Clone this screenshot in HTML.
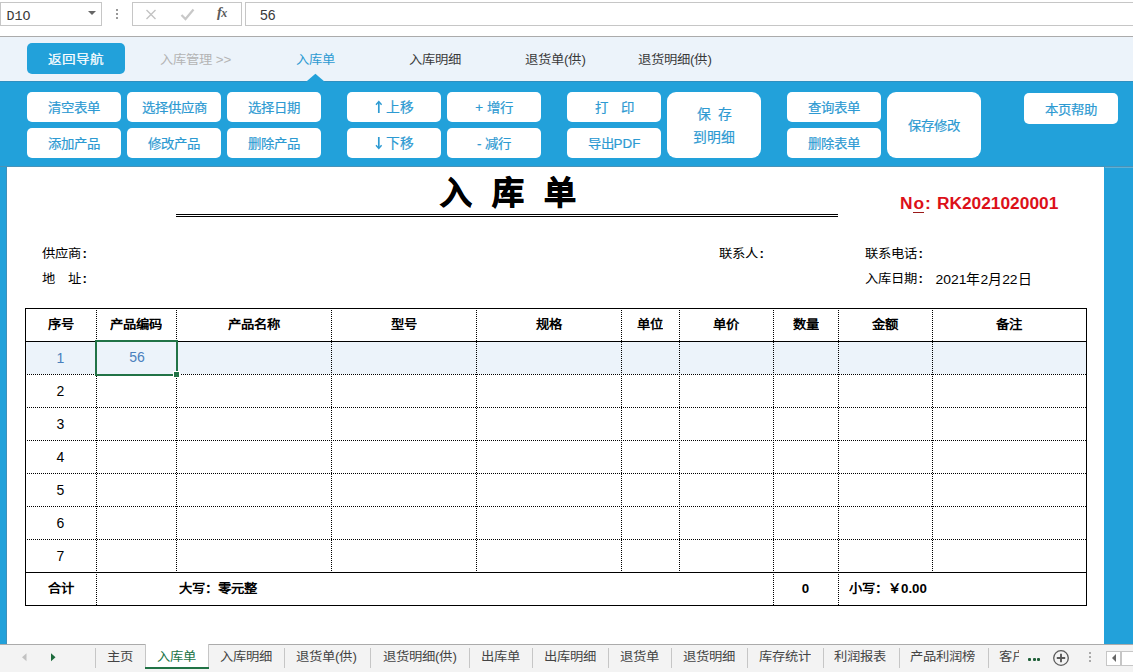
<!DOCTYPE html>
<html lang="zh-CN">
<head>
<meta charset="utf-8">
<style>
*{margin:0;padding:0;box-sizing:border-box}
html,body{width:1133px;height:672px;overflow:hidden;background:#fff;font-family:"Liberation Sans",sans-serif;position:relative}
.a{position:absolute;white-space:nowrap}
.s{display:inline-block;transform-origin:50% 50%}
.box{position:absolute;border:1px solid #c6c6c6;background:#fff}
.dv{position:absolute;width:1px;background-image:linear-gradient(#000 50%,transparent 50%);background-size:1px 2px}
.dh{position:absolute;height:1px;background-image:linear-gradient(90deg,#000 50%,transparent 50%);background-size:2px 1px}
</style>
</head>
<body>
<div class="box" style="left:0;top:2px;width:102px;height:24px"></div>
<div class="a" style="left:6.5px;top:8.5px;font-family:'Liberation Mono',monospace;font-size:13.33px;line-height:16px;color:#3a3a3a">D1O</div>
<div class="a" style="left:88px;top:11px;width:0;height:0;border-left:4px solid transparent;border-right:4px solid transparent;border-top:4px solid #666"></div>
<div class="a" style="left:116px;top:9px;width:2px;height:2px;background:#999"></div>
<div class="a" style="left:116px;top:13px;width:2px;height:2px;background:#999"></div>
<div class="a" style="left:116px;top:17px;width:2px;height:2px;background:#999"></div>
<div class="box" style="left:132px;top:2px;width:110px;height:24px"></div>
<div class="box" style="left:245px;top:2px;width:900px;height:24px"></div>
<svg class="a" style="left:145px;top:9px" width="12" height="11" viewBox="0 0 12 11"><path d="M1.5 1 L10.5 10 M10.5 1 L1.5 10" stroke="#c3c3c3" stroke-width="1.4" fill="none"/></svg>
<svg class="a" style="left:180px;top:8px" width="15" height="13" viewBox="0 0 15 13"><path d="M1.5 7 L5.5 11 L13.5 1.5" stroke="#c8c8c8" stroke-width="2.2" fill="none"/></svg>
<div class="a" style="left:217px;top:4px;font-family:'Liberation Serif',serif;font-style:italic;font-weight:bold;font-size:14.5px;line-height:16px;color:#5a5a5a;letter-spacing:-0.5px">f<span style="font-size:12px">x</span></div>
<div class="a" style="left:260px;top:7px;font-size:14px;line-height:16px;color:#3a3a3a">56</div>
<div class="a" style="left:0;top:36px;width:1133px;height:1px;background:#ababab"></div>
<div class="a" style="left:0;top:37px;width:1133px;height:44px;background:#ecf3fa"></div>
<div class="a" style="left:27px;top:43px;width:98px;height:31px;background:#22a1da;border-radius:5px"></div>
<div class="a" style="left:27px;top:43px;width:98px;height:31px;line-height:31px;text-align:center;font-size:13.6px;color:#fff;font-weight:normal;-webkit-text-stroke:0.25px #fff"><span class="s" style="transform:translateY(1.5px) scaleY(0.92)">返回导航</span></div>
<div class="a" style="left:160px;top:51px;font-size:13.33px;line-height:16px;color:#b4b4b4;font-weight:normal;"><span class="s" style="transform:translateY(1.3px) scaleY(0.92);">入库管理 &gt;&gt;</span></div>
<div class="a" style="left:296px;top:51px;font-size:13.33px;line-height:16px;color:#2d9ad2;font-weight:normal;"><span class="s" style="transform:translateY(1.3px) scaleY(0.92);">入库单</span></div>
<div class="a" style="left:409px;top:51px;font-size:13.33px;line-height:16px;color:#3a3a3a;font-weight:normal;"><span class="s" style="transform:translateY(1.3px) scaleY(0.92);">入库明细</span></div>
<div class="a" style="left:525px;top:51px;font-size:13.33px;line-height:16px;color:#3a3a3a;font-weight:normal;"><span class="s" style="transform:translateY(1.3px) scaleY(0.92);">退货单(供)</span></div>
<div class="a" style="left:638px;top:51px;font-size:13.33px;line-height:16px;color:#3a3a3a;font-weight:normal;"><span class="s" style="transform:translateY(1.3px) scaleY(0.92);">退货明细(供)</span></div>
<div class="a" style="left:0;top:81px;width:1133px;height:86px;background:#22a1da"></div>
<div class="a" style="left:0;top:81px;width:1133px;height:1px;background:#2f8fc0"></div>
<div class="a" style="left:0;top:166px;width:1133px;height:1px;background:#4893b9"></div>
<svg class="a" style="left:300px;top:70px" width="30" height="14" viewBox="300 70 30 14"><path d="M305.8 82L315.4 73.8L325 82Z" fill="#22a1da"/></svg>
<div class="a" style="left:27px;top:92px;width:94px;height:30px;background:#fff;border-radius:5px"></div>
<div class="a" style="left:27px;top:92px;width:94px;height:30px;line-height:30px;text-align:center;font-size:13.4px;color:#2d9ad2;font-weight:normal;-webkit-text-stroke:0.2px #2d9ad2"><span class="s" style="transform:translateY(1.5px) scaleY(0.95)">清空表单</span></div>
<div class="a" style="left:127px;top:92px;width:94px;height:30px;background:#fff;border-radius:5px"></div>
<div class="a" style="left:127px;top:92px;width:94px;height:30px;line-height:30px;text-align:center;font-size:13.4px;color:#2d9ad2;font-weight:normal;-webkit-text-stroke:0.2px #2d9ad2"><span class="s" style="transform:translateY(1.5px) scaleY(0.95)">选择供应商</span></div>
<div class="a" style="left:227px;top:92px;width:94px;height:30px;background:#fff;border-radius:5px"></div>
<div class="a" style="left:227px;top:92px;width:94px;height:30px;line-height:30px;text-align:center;font-size:13.4px;color:#2d9ad2;font-weight:normal;-webkit-text-stroke:0.2px #2d9ad2"><span class="s" style="transform:translateY(1.5px) scaleY(0.95)">选择日期</span></div>
<div class="a" style="left:27px;top:128px;width:94px;height:30px;background:#fff;border-radius:5px"></div>
<div class="a" style="left:27px;top:128px;width:94px;height:30px;line-height:30px;text-align:center;font-size:13.4px;color:#2d9ad2;font-weight:normal;-webkit-text-stroke:0.2px #2d9ad2"><span class="s" style="transform:translateY(1.5px) scaleY(0.95)">添加产品</span></div>
<div class="a" style="left:127px;top:128px;width:94px;height:30px;background:#fff;border-radius:5px"></div>
<div class="a" style="left:127px;top:128px;width:94px;height:30px;line-height:30px;text-align:center;font-size:13.4px;color:#2d9ad2;font-weight:normal;-webkit-text-stroke:0.2px #2d9ad2"><span class="s" style="transform:translateY(1.5px) scaleY(0.95)">修改产品</span></div>
<div class="a" style="left:227px;top:128px;width:94px;height:30px;background:#fff;border-radius:5px"></div>
<div class="a" style="left:227px;top:128px;width:94px;height:30px;line-height:30px;text-align:center;font-size:13.4px;color:#2d9ad2;font-weight:normal;-webkit-text-stroke:0.2px #2d9ad2"><span class="s" style="transform:translateY(1.5px) scaleY(0.95)">删除产品</span></div>
<div class="a" style="left:347px;top:92px;width:94px;height:30px;background:#fff;border-radius:5px"></div>
<div class="a" style="left:347px;top:128px;width:94px;height:30px;background:#fff;border-radius:5px"></div>
<div class="a" style="left:385.5px;top:99px;font-size:13.8px;line-height:16px;color:#2d9ad2;font-weight:normal;-webkit-text-stroke:0.2px #2d9ad2"><span class="s" style="transform:translateY(1.5px) scaleY(0.95);">上移</span></div>
<div class="a" style="left:385.5px;top:135px;font-size:13.8px;line-height:16px;color:#2d9ad2;font-weight:normal;-webkit-text-stroke:0.2px #2d9ad2"><span class="s" style="transform:translateY(1.5px) scaleY(0.95);">下移</span></div>
<svg class="a" style="left:374px;top:100px" width="10" height="14" viewBox="0 0 10 14"><path d="M4.8 13V2" stroke="#2d9ad2" stroke-width="1.7"/><path d="M2 4.8L4.8 1.6L7.6 4.8" stroke="#2d9ad2" stroke-width="1.4" fill="none"/></svg>
<svg class="a" style="left:374px;top:136px" width="10" height="14" viewBox="0 0 10 14"><path d="M4.8 1V12" stroke="#2d9ad2" stroke-width="1.7"/><path d="M2 9.2L4.8 12.4L7.6 9.2" stroke="#2d9ad2" stroke-width="1.4" fill="none"/></svg>
<div class="a" style="left:447px;top:92px;width:94px;height:30px;background:#fff;border-radius:5px"></div>
<div class="a" style="left:447px;top:92px;width:94px;height:30px;line-height:30px;text-align:center;font-size:13.4px;color:#2d9ad2;font-weight:normal;-webkit-text-stroke:0.2px #2d9ad2"><span class="s" style="transform:translateY(1.5px) scaleY(0.95)">+ 增行</span></div>
<div class="a" style="left:447px;top:128px;width:94px;height:30px;background:#fff;border-radius:5px"></div>
<div class="a" style="left:447px;top:128px;width:94px;height:30px;line-height:30px;text-align:center;font-size:13.4px;color:#2d9ad2;font-weight:normal;-webkit-text-stroke:0.2px #2d9ad2"><span class="s" style="transform:translateY(1.5px) scaleY(0.95)">- 减行</span></div>
<div class="a" style="left:567px;top:92px;width:94px;height:30px;background:#fff;border-radius:5px"></div>
<div class="a" style="left:567px;top:92px;width:94px;height:30px;line-height:30px;text-align:center;font-size:13.4px;color:#2d9ad2;font-weight:normal;-webkit-text-stroke:0.2px #2d9ad2"><span class="s" style="transform:translateY(1.5px) scaleY(0.95)">打　印</span></div>
<div class="a" style="left:567px;top:128px;width:94px;height:30px;background:#fff;border-radius:5px"></div>
<div class="a" style="left:567px;top:128px;width:94px;height:30px;line-height:30px;text-align:center;font-size:13.4px;color:#2d9ad2;font-weight:normal;-webkit-text-stroke:0.2px #2d9ad2"><span class="s" style="transform:translateY(1.5px) scaleY(0.95)">导出PDF</span></div>
<div class="a" style="left:667px;top:92px;width:94px;height:66px;background:#fff;border-radius:9px"></div>
<div class="a" style="left:696.5px;top:106px;font-size:13.8px;line-height:16px;color:#2d9ad2;font-weight:normal;-webkit-text-stroke:0.2px #2d9ad2"><span class="s" style="transform:translateY(1.5px) scaleY(0.95);">保</span></div>
<div class="a" style="left:717.5px;top:106px;font-size:13.8px;line-height:16px;color:#2d9ad2;font-weight:normal;-webkit-text-stroke:0.2px #2d9ad2"><span class="s" style="transform:translateY(1.5px) scaleY(0.95);">存</span></div>
<div class="a" style="left:667px;top:125px;width:94px;height:23px;line-height:23px;text-align:center;font-size:13.8px;color:#2d9ad2;font-weight:normal;-webkit-text-stroke:0.2px #2d9ad2"><span class="s" style="transform:translateY(1.5px) scaleY(0.95)">到明细</span></div>
<div class="a" style="left:787px;top:92px;width:94px;height:30px;background:#fff;border-radius:5px"></div>
<div class="a" style="left:787px;top:92px;width:94px;height:30px;line-height:30px;text-align:center;font-size:13.4px;color:#2d9ad2;font-weight:normal;-webkit-text-stroke:0.2px #2d9ad2"><span class="s" style="transform:translateY(1.5px) scaleY(0.95)">查询表单</span></div>
<div class="a" style="left:787px;top:128px;width:94px;height:30px;background:#fff;border-radius:5px"></div>
<div class="a" style="left:787px;top:128px;width:94px;height:30px;line-height:30px;text-align:center;font-size:13.4px;color:#2d9ad2;font-weight:normal;-webkit-text-stroke:0.2px #2d9ad2"><span class="s" style="transform:translateY(1.5px) scaleY(0.95)">删除表单</span></div>
<div class="a" style="left:887px;top:92px;width:94px;height:66px;background:#fff;border-radius:9px"></div>
<div class="a" style="left:887px;top:92px;width:94px;height:66px;line-height:66px;text-align:center;font-size:13.4px;color:#2d9ad2;font-weight:normal;-webkit-text-stroke:0.2px #2d9ad2"><span class="s" style="transform:translateY(1.5px) scaleY(0.95)">保存修改</span></div>
<div class="a" style="left:1024px;top:93px;width:94px;height:31px;background:#fff;border-radius:5px"></div>
<div class="a" style="left:1024px;top:93px;width:94px;height:31px;line-height:31px;text-align:center;font-size:13.4px;color:#2d9ad2;font-weight:normal;-webkit-text-stroke:0.2px #2d9ad2"><span class="s" style="transform:translateY(1.5px) scaleY(0.95)">本页帮助</span></div>
<div class="a" style="left:0;top:167px;width:7px;height:477px;background:#22a1da"></div>
<div class="a" style="left:1104px;top:167px;width:29px;height:477px;background:#22a1da"></div>
<div class="a" style="left:6px;top:167px;width:1px;height:477px;background:#3f90bb"></div>
<div class="a" style="left:1105px;top:167px;width:28px;height:1px;background:#5eb0d6"></div>
<div class="a" style="left:440px;top:171px;font-size:32px;line-height:44px;font-weight:bold;color:#000;-webkit-text-stroke:0.9px #000">入</div>
<div class="a" style="left:492px;top:171px;font-size:32px;line-height:44px;font-weight:bold;color:#000;-webkit-text-stroke:0.9px #000">库</div>
<div class="a" style="left:544px;top:171px;font-size:32px;line-height:44px;font-weight:bold;color:#000;-webkit-text-stroke:0.9px #000">单</div>
<div class="a" style="left:176px;top:214px;width:662px;height:1px;background:#000"></div>
<div class="a" style="left:176px;top:216px;width:662px;height:1px;background:#000"></div>
<div class="a" style="left:900px;top:193px;font-size:17.33px;line-height:20px;font-weight:bold;color:#dc1019">N<span style="margin-left:1px">o</span><span style="margin-left:1px">:</span><span style="margin-left:6px">RK2021020001</span></div>
<div class="a" style="left:913px;top:212px;width:11px;height:1px;background:#9a1a1a"></div>
<div class="a" style="left:42px;top:246px;font-size:13.33px;line-height:16px;color:#000;font-weight:normal;"><span class="s" style="transform:translateY(0px) scaleY(0.92);">供应商<b style="margin-left:1.5px">:</b></span></div>
<div class="a" style="left:42px;top:271px;font-size:13.33px;line-height:16px;color:#000;font-weight:normal;"><span class="s" style="transform:translateY(0px) scaleY(0.92);">地　址<b style="margin-left:1.5px">:</b></span></div>
<div class="a" style="left:719px;top:246px;font-size:13.33px;line-height:16px;color:#000;font-weight:normal;"><span class="s" style="transform:translateY(0px) scaleY(0.92);">联系人<b style="margin-left:1.5px">:</b></span></div>
<div class="a" style="left:865px;top:246px;font-size:13.33px;line-height:16px;color:#000;font-weight:normal;"><span class="s" style="transform:translateY(0px) scaleY(0.92);">联系电话<b style="margin-left:1.5px">:</b></span></div>
<div class="a" style="left:865px;top:271px;font-size:13.33px;line-height:16px;color:#000;font-weight:normal;"><span class="s" style="transform:translateY(0px) scaleY(0.92);">入库日期<b style="margin-left:1.5px">:</b></span></div>
<div class="a" style="left:935.5px;top:271px;font-size:13.9px;line-height:16px;color:#000;font-weight:normal;"><span class="s" style="transform:translateY(0px) scaleY(0.95);">2021年2月22日</span></div>
<div class="a" style="left:26px;top:342px;width:1060px;height:32px;background:#ecf3fa"></div>
<div class="a" style="left:25px;top:308px;width:1062px;height:1px;background:#000"></div>
<div class="a" style="left:25px;top:341px;width:1062px;height:1px;background:#000"></div>
<div class="a" style="left:25px;top:572px;width:1062px;height:1px;background:#000"></div>
<div class="a" style="left:25px;top:605px;width:1062px;height:1px;background:#000"></div>
<div class="a" style="left:25px;top:308px;width:1px;height:298px;background:#000"></div>
<div class="a" style="left:1086px;top:308px;width:1px;height:298px;background:#000"></div>
<div class="dh" style="left:27px;top:374px;width:1059px"></div>
<div class="dh" style="left:27px;top:407px;width:1059px"></div>
<div class="dh" style="left:27px;top:440px;width:1059px"></div>
<div class="dh" style="left:27px;top:473px;width:1059px"></div>
<div class="dh" style="left:27px;top:506px;width:1059px"></div>
<div class="dh" style="left:27px;top:539px;width:1059px"></div>
<div class="dv" style="left:96px;top:310px;height:262px"></div>
<div class="dv" style="left:176px;top:310px;height:262px"></div>
<div class="dv" style="left:331px;top:310px;height:262px"></div>
<div class="dv" style="left:476px;top:310px;height:262px"></div>
<div class="dv" style="left:621px;top:310px;height:262px"></div>
<div class="dv" style="left:679px;top:310px;height:262px"></div>
<div class="dv" style="left:773px;top:310px;height:262px"></div>
<div class="dv" style="left:838px;top:310px;height:262px"></div>
<div class="dv" style="left:932px;top:310px;height:262px"></div>
<div class="dv" style="left:96px;top:574px;height:31px"></div>
<div class="dv" style="left:773px;top:574px;height:31px"></div>
<div class="dv" style="left:838px;top:574px;height:31px"></div>
<div class="a" style="left:25px;top:309px;width:71px;height:32px;line-height:32px;text-align:center;font-size:13.33px;color:#000;font-weight:bold;"><span class="s" style="transform:translateY(0px) scaleY(0.92)">序号</span></div>
<div class="a" style="left:96px;top:309px;width:80px;height:32px;line-height:32px;text-align:center;font-size:13.33px;color:#000;font-weight:bold;"><span class="s" style="transform:translateY(0px) scaleY(0.92)">产品编码</span></div>
<div class="a" style="left:176px;top:309px;width:155px;height:32px;line-height:32px;text-align:center;font-size:13.33px;color:#000;font-weight:bold;"><span class="s" style="transform:translateY(0px) scaleY(0.92)">产品名称</span></div>
<div class="a" style="left:331px;top:309px;width:145px;height:32px;line-height:32px;text-align:center;font-size:13.33px;color:#000;font-weight:bold;"><span class="s" style="transform:translateY(0px) scaleY(0.92)">型号</span></div>
<div class="a" style="left:476px;top:309px;width:145px;height:32px;line-height:32px;text-align:center;font-size:13.33px;color:#000;font-weight:bold;"><span class="s" style="transform:translateY(0px) scaleY(0.92)">规格</span></div>
<div class="a" style="left:621px;top:309px;width:58px;height:32px;line-height:32px;text-align:center;font-size:13.33px;color:#000;font-weight:bold;"><span class="s" style="transform:translateY(0px) scaleY(0.92)">单位</span></div>
<div class="a" style="left:679px;top:309px;width:94px;height:32px;line-height:32px;text-align:center;font-size:13.33px;color:#000;font-weight:bold;"><span class="s" style="transform:translateY(0px) scaleY(0.92)">单价</span></div>
<div class="a" style="left:773px;top:309px;width:65px;height:32px;line-height:32px;text-align:center;font-size:13.33px;color:#000;font-weight:bold;"><span class="s" style="transform:translateY(0px) scaleY(0.92)">数量</span></div>
<div class="a" style="left:838px;top:309px;width:94px;height:32px;line-height:32px;text-align:center;font-size:13.33px;color:#000;font-weight:bold;"><span class="s" style="transform:translateY(0px) scaleY(0.92)">金额</span></div>
<div class="a" style="left:932px;top:309px;width:154px;height:32px;line-height:32px;text-align:center;font-size:13.33px;color:#000;font-weight:bold;"><span class="s" style="transform:translateY(0px) scaleY(0.92)">备注</span></div>
<div class="a" style="left:25px;top:342px;width:71px;height:32px;line-height:32px;text-align:center;font-size:14px;color:#4a80bd">1</div>
<div class="a" style="left:25px;top:375px;width:71px;height:32px;line-height:32px;text-align:center;font-size:14px;color:#000">2</div>
<div class="a" style="left:25px;top:408px;width:71px;height:32px;line-height:32px;text-align:center;font-size:14px;color:#000">3</div>
<div class="a" style="left:25px;top:441px;width:71px;height:32px;line-height:32px;text-align:center;font-size:14px;color:#000">4</div>
<div class="a" style="left:25px;top:474px;width:71px;height:32px;line-height:32px;text-align:center;font-size:14px;color:#000">5</div>
<div class="a" style="left:25px;top:507px;width:71px;height:32px;line-height:32px;text-align:center;font-size:14px;color:#000">6</div>
<div class="a" style="left:25px;top:540px;width:71px;height:32px;line-height:32px;text-align:center;font-size:14px;color:#000">7</div>
<div class="a" style="left:97px;top:341px;width:80px;height:32px;line-height:32px;text-align:center;font-size:14px;color:#4a80bd">56</div>
<div class="a" style="left:95px;top:340px;width:83px;height:36px;border:2px solid #217346"></div>
<div class="a" style="left:174px;top:372px;width:5px;height:5px;background:#217346;outline:1px solid #fff"></div>
<div class="a" style="left:25px;top:573px;width:71px;height:32px;line-height:32px;text-align:center;font-size:13.33px;color:#000;font-weight:bold;"><span class="s" style="transform:translateY(0px) scaleY(0.92)">合计</span></div>
<div class="a" style="left:179px;top:581px;font-size:13.33px;line-height:16px;color:#000;font-weight:bold;"><span class="s" style="transform:translateY(0px) scaleY(0.92);">大写：零元整</span></div>
<div class="a" style="left:773px;top:573px;width:65px;height:32px;line-height:32px;text-align:center;font-size:13.33px;font-weight:bold">0</div>
<div class="a" style="left:849px;top:581px;font-size:13.33px;line-height:16px;color:#000;font-weight:bold;"><span class="s" style="transform:translateY(0px) scaleY(0.92);">小写：￥0.00</span></div>
<div class="a" style="left:0;top:644px;width:1133px;height:1px;background:#ababab"></div>
<div class="a" style="left:0;top:645px;width:1133px;height:27px;background:#f3f3f3"></div>
<div class="a" style="left:145px;top:644px;width:64px;height:23px;background:#fff;border-left:1px solid #c6c6c6;border-right:1px solid #c6c6c6"></div>
<div class="a" style="left:145px;top:667px;width:64px;height:2px;background:#217346"></div>
<div class="a" style="left:95px;top:648px;width:1px;height:20px;background:#c6c6c6"></div>
<div class="a" style="left:284px;top:648px;width:1px;height:20px;background:#c6c6c6"></div>
<div class="a" style="left:370px;top:648px;width:1px;height:20px;background:#c6c6c6"></div>
<div class="a" style="left:469px;top:648px;width:1px;height:20px;background:#c6c6c6"></div>
<div class="a" style="left:532px;top:648px;width:1px;height:20px;background:#c6c6c6"></div>
<div class="a" style="left:608px;top:648px;width:1px;height:20px;background:#c6c6c6"></div>
<div class="a" style="left:671px;top:648px;width:1px;height:20px;background:#c6c6c6"></div>
<div class="a" style="left:747px;top:648px;width:1px;height:20px;background:#c6c6c6"></div>
<div class="a" style="left:823px;top:648px;width:1px;height:20px;background:#c6c6c6"></div>
<div class="a" style="left:899px;top:648px;width:1px;height:20px;background:#c6c6c6"></div>
<div class="a" style="left:988px;top:648px;width:1px;height:20px;background:#c6c6c6"></div>
<div class="a" style="left:107px;top:649px;font-size:13.33px;line-height:16px;color:#444;font-weight:normal;"><span class="s" style="transform:translateY(0px) scaleY(0.92);">主页</span></div>
<div class="a" style="left:157px;top:649px;font-size:13.33px;line-height:16px;color:#217346;font-weight:normal;"><span class="s" style="transform:translateY(0px) scaleY(0.92);">入库单</span></div>
<div class="a" style="left:220px;top:649px;font-size:13.33px;line-height:16px;color:#444;font-weight:normal;"><span class="s" style="transform:translateY(0px) scaleY(0.92);">入库明细</span></div>
<div class="a" style="left:296px;top:649px;font-size:13.33px;line-height:16px;color:#444;font-weight:normal;"><span class="s" style="transform:translateY(0px) scaleY(0.92);">退货单(供)</span></div>
<div class="a" style="left:383px;top:649px;font-size:13.33px;line-height:16px;color:#444;font-weight:normal;"><span class="s" style="transform:translateY(0px) scaleY(0.92);">退货明细(供)</span></div>
<div class="a" style="left:481px;top:649px;font-size:13.33px;line-height:16px;color:#444;font-weight:normal;"><span class="s" style="transform:translateY(0px) scaleY(0.92);">出库单</span></div>
<div class="a" style="left:544px;top:649px;font-size:13.33px;line-height:16px;color:#444;font-weight:normal;"><span class="s" style="transform:translateY(0px) scaleY(0.92);">出库明细</span></div>
<div class="a" style="left:620px;top:649px;font-size:13.33px;line-height:16px;color:#444;font-weight:normal;"><span class="s" style="transform:translateY(0px) scaleY(0.92);">退货单</span></div>
<div class="a" style="left:683px;top:649px;font-size:13.33px;line-height:16px;color:#444;font-weight:normal;"><span class="s" style="transform:translateY(0px) scaleY(0.92);">退货明细</span></div>
<div class="a" style="left:759px;top:649px;font-size:13.33px;line-height:16px;color:#444;font-weight:normal;"><span class="s" style="transform:translateY(0px) scaleY(0.92);">库存统计</span></div>
<div class="a" style="left:834px;top:649px;font-size:13.33px;line-height:16px;color:#444;font-weight:normal;"><span class="s" style="transform:translateY(0px) scaleY(0.92);">利润报表</span></div>
<div class="a" style="left:910px;top:649px;font-size:13.33px;line-height:16px;color:#444;font-weight:normal;"><span class="s" style="transform:translateY(0px) scaleY(0.92);">产品利润榜</span></div>
<div class="a" style="left:999px;top:649px;font-size:13.33px;line-height:16px;color:#444;font-weight:normal;width:20px;overflow:hidden;"><span class="s" style="transform:translateY(0px) scaleY(0.92);">客户</span></div>
<svg class="a" style="left:0;top:640px" width="70" height="30" viewBox="0 640 70 30"><path d="M26.5 653.3L22 657.3L26.5 661.3Z" fill="#c2c2c2"/><path d="M51 653.3L55.5 657.3L51 661.3Z" fill="#1d6b3c"/></svg>
<div class="a" style="left:1028px;top:658px;width:3px;height:3px;background:#1f5f38;border-radius:1px"></div>
<div class="a" style="left:1032.5px;top:658px;width:3px;height:3px;background:#1f5f38;border-radius:1px"></div>
<div class="a" style="left:1037px;top:658px;width:3px;height:3px;background:#1f5f38;border-radius:1px"></div>
<svg class="a" style="left:1052px;top:649px" width="18" height="18" viewBox="0 0 18 18"><circle cx="9" cy="9" r="7.3" stroke="#5a5a5a" stroke-width="1.3" fill="none"/><path d="M9 4.8V13.2M4.8 9H13.2" stroke="#5a5a5a" stroke-width="1.9"/></svg>
<div class="a" style="left:1089px;top:652px;width:2px;height:2px;background:#aaa"></div>
<div class="a" style="left:1089px;top:656px;width:2px;height:2px;background:#aaa"></div>
<div class="a" style="left:1089px;top:660px;width:2px;height:2px;background:#aaa"></div>
<div class="a" style="left:1106px;top:651px;width:30px;height:15px;border:1px solid #c6c6c6;background:#fff"></div>
<div class="a" style="left:1120px;top:651px;width:2px;height:15px;background:#c6c6c6"></div>
<div class="a" style="left:1112px;top:654px;width:0;height:0;border-top:4px solid transparent;border-bottom:4px solid transparent;border-right:4px solid #666"></div>
</body>
</html>
